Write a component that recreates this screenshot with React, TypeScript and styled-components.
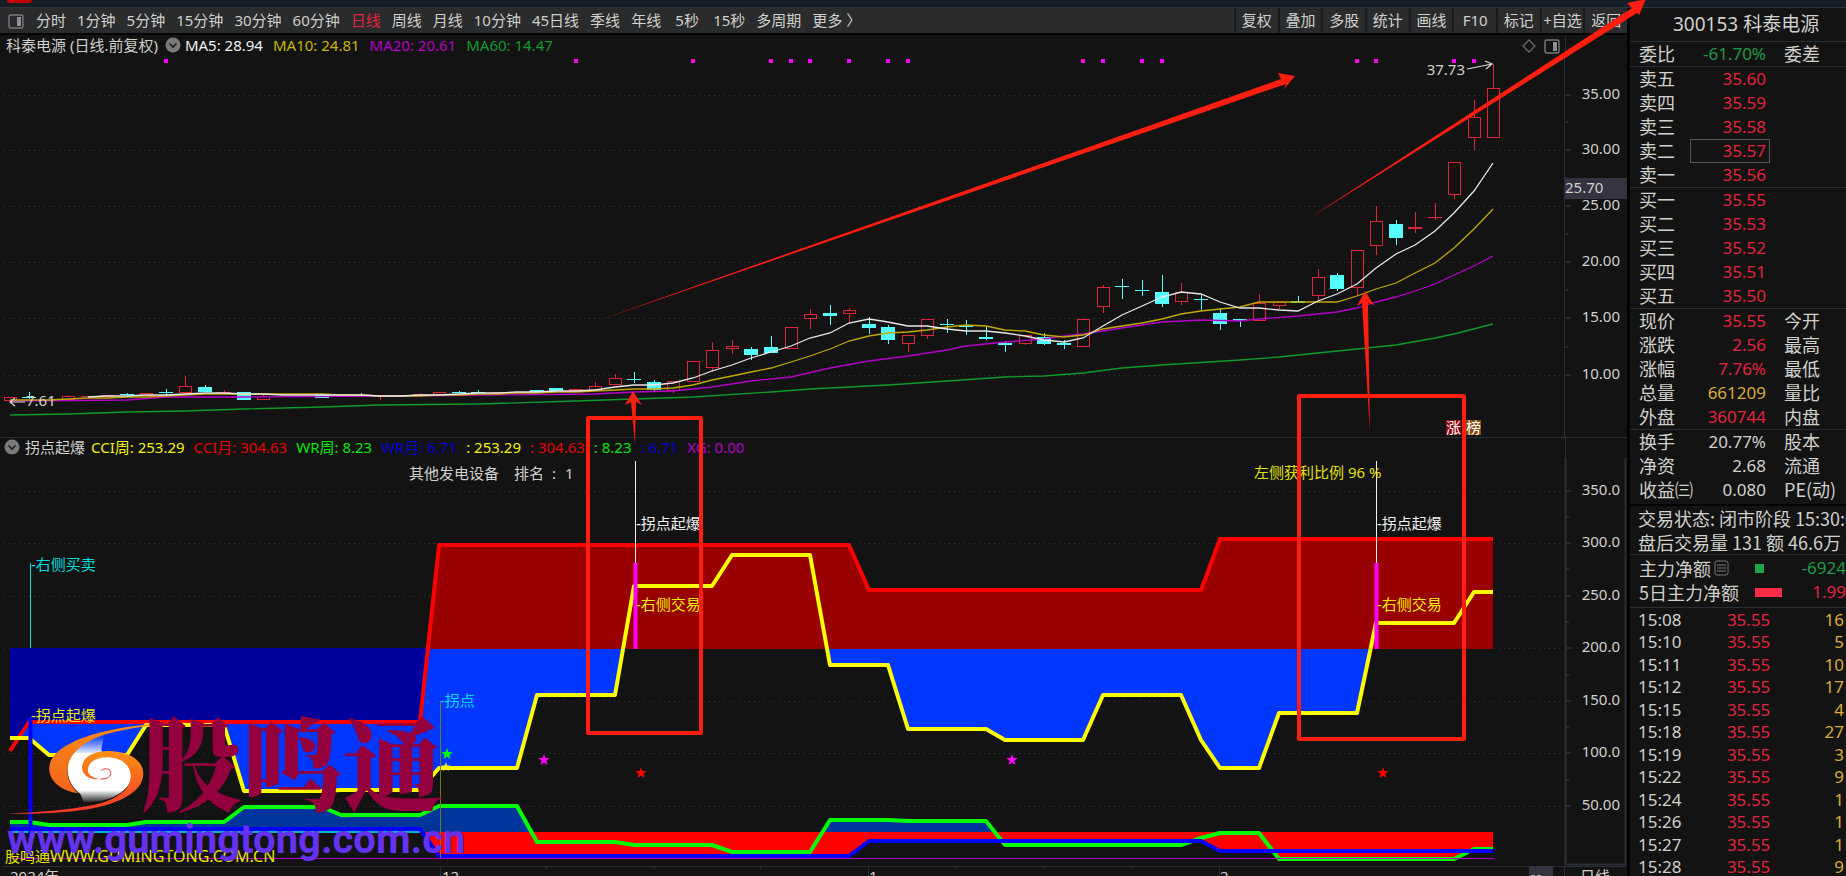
import React from 'react';
import styled, { createGlobalStyle } from 'styled-components';

const LATIN = '"Noto Sans", "Noto Sans CJK SC", sans-serif';

const GlobalStyle = createGlobalStyle`
  *, *::before, *::after { box-sizing: border-box; }
  body { margin: 0; background: #131213; overflow: hidden; }
  button { font: inherit; color: inherit; background: none; border: 0; padding: 0; cursor: pointer; white-space: nowrap; }
`;

const C = {
  bg: '#141314',
  line: '#2a2e36',
  text: '#d0d0cc',
  red: '#e0243c',
  green: '#1f9a45',
  gold: '#d9ab38',
  cyan: '#55ffff',
  mark: '#ff1e10',
};

/* ---------- page frame ---------- */

const Page = styled.div`
  height: 100vh;
  overflow: hidden;
  background: ${C.bg};
  color: ${C.text};
  font-family: ${LATIN};
  font-size: 15px;
  line-height: 20px;
`;

const TopStrip = styled.div`
  height: 8px;
  background: #161d25;
  border-bottom: 1px solid #2c333b;
`;

const RedTab = styled.div`
  width: 25px;
  height: 3px;
  margin-left: 7px;
  background: #c00404;
  border-radius: 0 0 4px 4px;
`;

const Columns = styled.div`
  display: flex;
  align-items: flex-start;
`;

const Main = styled.main`
  position: relative;
  flex: 1;
  min-width: 0;
`;

/* ---------- toolbar ---------- */

const Toolbar = styled.nav`
  display: flex;
  align-items: center;
  justify-content: space-between;
  height: 25px;
  padding-left: 7px;
  background: #2a2b2d;
`;

const Periods = styled.div`
  display: flex;
  align-items: center;
  gap: 11px;
`;

const Period = styled.button<{ $active?: boolean }>`
  min-width: 30px;
  line-height: 25px;
  color: ${(p) => (p.$active ? C.red : C.text)};
`;

const PanelToggle = styled.button`
  width: 18px;
  height: 16px;
`;

const Tools = styled.div`
  display: grid;
  grid-template-columns: repeat(9, 1fr);
  width: 393px;
  height: 25px;
`;

const Tool = styled.button`
  border-left: 2px solid #1b1b1c;
  line-height: 25px;
`;

/* ---------- chart panels ---------- */

const ChartHead = styled.header<{ $lower?: boolean }>`
  display: flex;
  align-items: center;
  height: ${(p) => (p.$lower ? 21 : 24)}px;
  padding-left: ${(p) => (p.$lower ? 4 : 6)}px;
  border-top: ${(p) => (p.$lower ? `1px solid ${C.line}` : '2px solid #050505')};
`;

const ChartTitle = styled.div<{ $gap: number; $after: number }>`
  display: flex;
  align-items: center;
  gap: ${(p) => p.$gap}px;
  margin-right: ${(p) => p.$after}px;
  padding-bottom: 2px;
  white-space: nowrap;
`;

const Legend = styled.div<{ $gap: number }>`
  display: flex;
  flex: 1;
  align-items: center;
  gap: ${(p) => p.$gap}px;
  padding-bottom: 2px;
  white-space: nowrap;
`;

const LegendItem = styled.span<{ $color: string }>`
  color: ${(p) => p.$color};
`;

const HeadIcons = styled.div`
  display: flex;
  align-items: center;
  gap: 7px;
  margin-right: 5px;
`;

const AxisHead = styled.div`
  align-self: stretch;
  width: 62px;
  border-left: 1px solid ${C.line};
`;

const Chart = styled.svg`
  display: block;
  width: 100%;
  height: auto;
  font-family: ${LATIN};
  font-size: 15px;
`;

const Marks = styled.svg`
  position: absolute;
  top: 0;
  left: 0;
  width: 100%;
  height: auto;
  overflow: visible;
  pointer-events: none;
`;

/* ---------- quote panel ---------- */

const Side = styled.aside`
  flex: none;
  width: 219px;
  border-left: 3px solid #020202;
  overflow: hidden;
  font-family: "Noto Sans CJK SC", sans-serif;
  font-size: 18px;
  white-space: nowrap;
`;

const StockName = styled.h1`
  margin: 0;
  height: 34px;
  padding-left: 43px;
  border-bottom: 1px solid ${C.line};
  font-family: ${LATIN};
  font-size: 19px;
  font-weight: 400;
  line-height: 33px;
`;

const Block = styled.section<{ $pad?: string; $strong?: boolean }>`
  padding: ${(p) => p.$pad ?? '0'};
  border-bottom: ${(p) => (p.$strong ? '2px solid #020202' : `1px solid ${C.line}`)};
`;

const QuoteTable = styled.table`
  width: 100%;
  table-layout: fixed;
  border-collapse: separate;
  border-spacing: 0;
  td, th { padding: 0; height: 24px; line-height: 22px; font-weight: 400; text-align: left; vertical-align: top; }
`;

const Label = styled.th`
  width: 60px;
  && { padding-left: 9px; }
`;

const Value = styled.td<{ $color?: string }>`
  width: 80px;
  color: ${(p) => p.$color ?? C.text};
  font-family: ${LATIN};
  font-size: 17px;
  && { text-align: right; }
`;

const Amount = styled.span<{ $boxed?: boolean }>`
  display: block;
  height: 24px;
  padding-right: 3px;
  border: 1px solid ${(p) => (p.$boxed ? '#555' : 'transparent')};
  line-height: 21px;
`;

const Label2 = styled.th`
  && { padding-left: 14px; }
`;

const Status = styled.p`
  margin: 0;
  padding-left: 8px;
  font-size: 18px;
  line-height: 24px;
`;

const FlowRow = styled.div`
  display: flex;
  align-items: center;
  height: 24px;
  padding-left: 9px;
`;

const FlowLabel = styled.span`
  display: flex;
  align-items: center;
  gap: 3px;
  width: 116px;
`;

const FlowBar = styled.span<{ $color: string; $w: number }>`
  width: ${(p) => p.$w}px;
  height: 9px;
  background: ${(p) => p.$color};
`;

const FlowValue = styled.span<{ $color: string }>`
  flex: 1;
  color: ${(p) => p.$color};
  font-family: ${LATIN};
  font-size: 17px;
  text-align: right;
`;

const TickTable = styled.table`
  width: 100%;
  border-collapse: separate;
  border-spacing: 0;
  font-family: ${LATIN};
  font-size: 17px;
  line-height: 22px;
  td { padding: 0; height: 23px; }
  tr:nth-child(even) td { height: 22px; }
`;

const TickTime = styled.td`
  && { padding-left: 8px; }
`;

const TickPrice = styled.td`
  width: 90px;
  color: ${C.red};
  text-align: right;
`;

const TickVolume = styled.td`
  width: 77px;
  color: ${C.gold};
  text-align: right;
  && { padding-right: 2px; }
`;

/* ---------- data ---------- */

const periods = ['分时', '1分钟', '5分钟', '15分钟', '30分钟', '60分钟', '日线', '周线', '月线', '10分钟', '45日线', '季线', '年线', '5秒', '15秒', '多周期', '更多 〉'];
const tools = ['复权', '叠加', '多股', '统计', '画线', 'F10', '标记', '+自选', '返回'];

const maLegend: [string, string][] = [
  ['MA5: 28.94', '#f0f0f0'],
  ['MA10: 24.81', '#c9b400'],
  ['MA20: 20.61', '#b400c8'],
  ['MA60: 14.47', '#0f9a2c'],
];
const cciLegend: [string, string][] = [
  ['CCI周: 253.29', '#f2f200'],
  ['CCI月: 304.63', '#e60000'],
  ['WR周: 8.23', '#00e600'],
  ['WR月: 6.71', '#0000dc'],
  [': 253.29', '#f2f200'],
  [': 304.63', '#e60000'],
  [': 8.23', '#00e600'],
  [': 6.71', '#0000dc'],
  ['XG: 0.00', '#b400c8'],
];

// [index, kind, body top, body bottom, wick top, wick bottom]
type Candle = [number, 'r' | 'c', number, number, number, number];
const candles: Candle[] = [
  [0, 'r', 397, 401, 397, 401], [1, 'c', 397, 397, 392, 399], [3, 'r', 396, 400, 395, 400], [4, 'r', 396, 397, 396, 397],
  [5, 'r', 395, 397, 395, 397], [6, 'c', 394, 395, 393, 396], [7, 'r', 393, 396, 393, 396], [8, 'c', 392, 392, 389, 395],
  [9, 'r', 386, 393, 376, 393], [10, 'c', 387, 392, 385, 392], [11, 'r', 392, 392, 390, 393], [12, 'c', 392, 400, 392, 400],
  [13, 'r', 396, 400, 395, 400], [14, 'r', 394, 395, 394, 395], [16, 'c', 394, 398, 394, 398], [17, 'r', 396, 397, 396, 397],
  [18, 'c', 395, 395, 393, 396], [19, 'r', 396, 397, 396, 400], [20, 'r', 396, 397, 396, 397], [21, 'r', 394, 395, 393, 395],
  [22, 'r', 392, 395, 392, 395], [23, 'c', 392, 393, 391, 393], [24, 'c', 392, 393, 390, 393], [25, 'r', 392, 393, 392, 393],
  [27, 'c', 390, 392, 390, 392], [28, 'c', 388, 391, 388, 391], [29, 'r', 389, 391, 389, 391], [30, 'r', 386, 390, 382, 390],
  [31, 'r', 378, 385, 374, 385], [32, 'c', 379, 379, 372, 383], [33, 'c', 382, 390, 380, 391], [34, 'r', 381, 391, 381, 393],
  [35, 'r', 361, 382, 361, 382], [36, 'r', 350, 368, 342, 372], [37, 'r', 346, 349, 340, 354], [38, 'c', 349, 355, 347, 360],
  [39, 'c', 347, 353, 336, 353], [40, 'r', 327, 349, 327, 349], [41, 'r', 314, 319, 309, 329], [42, 'c', 313, 316, 305, 325],
  [43, 'r', 310, 314, 308, 323], [44, 'c', 324, 328, 317, 334], [45, 'c', 327, 340, 325, 344], [46, 'r', 335, 344, 335, 352],
  [47, 'r', 319, 336, 319, 339], [48, 'c', 324, 324, 319, 333], [49, 'c', 326, 326, 320, 335], [50, 'c', 337, 339, 326, 340],
  [51, 'c', 343, 345, 341, 352], [52, 'r', 335, 344, 335, 345], [53, 'c', 337, 344, 333, 345], [54, 'c', 343, 345, 340, 349],
  [55, 'r', 319, 347, 319, 347], [56, 'r', 287, 307, 285, 313], [57, 'c', 286, 286, 279, 299], [58, 'c', 290, 290, 280, 296],
  [59, 'c', 292, 304, 275, 307], [60, 'r', 292, 302, 283, 305], [61, 'c', 299, 299, 295, 310], [62, 'c', 313, 324, 308, 330],
  [63, 'c', 319, 321, 319, 327], [64, 'r', 303, 321, 294, 321], [65, 'r', 302, 306, 302, 309], [66, 'c', 301, 303, 296, 303],
  [67, 'r', 277, 296, 269, 301], [68, 'c', 275, 289, 273, 291], [69, 'r', 250, 288, 250, 296], [70, 'r', 221, 246, 206, 255],
  [71, 'c', 224, 238, 220, 245], [72, 'r', 227, 229, 212, 233], [73, 'r', 217, 217, 203, 220], [74, 'r', 162, 195, 162, 199],
  [75, 'r', 117, 138, 100, 150], [76, 'r', 88, 138, 64, 138],
];

type Pt = [number, number];
const ma5 = [
  397, 396, 396, 395, 395, 394, 393, 393, 394, 394, 395, 395, 395, 395, 395, 396, 396, 395, 395, 394, 393, 393, 392, 392, 391, 391, 390,
  387, 385, 385, 383, 378, 371, 365, 358, 352, 346, 338, 333, 323, 319, 322, 326, 326, 329, 331, 331, 333, 336, 340, 342, 338, 326, 315,
  306, 297, 292, 294, 302, 308, 308, 310, 311, 301, 294, 284, 268, 254, 245, 231, 213, 191, 163,
].map((y, i): Pt => [i + 4, y]);
const ma10 = [
  400, 400, 400, 399, 398, 398, 397, 397, 396, 395, 394, 394, 394, 394, 394, 394, 394, 395, 395, 396, 396, 396, 395, 395, 394, 394, 393,
  393, 392, 392, 391, 390, 389, 389, 388, 385, 380, 376, 372, 368, 362, 356, 349, 341, 336, 333, 332, 330, 327, 325, 326, 330, 331, 335,
  337, 335, 329, 326, 323, 319, 314, 311, 309, 307, 302, 302, 302, 302, 302, 296, 289, 283, 273, 263, 248, 229, 209,
].map((y, i): Pt => [i, y]);
const ma20: Pt[] = [
  [0, 401], [6, 400], [8, 397], [12, 397], [20, 396], [30, 394], [32, 392], [34, 391], [36, 387], [38, 381], [40, 377], [42, 368],
  [44, 361], [46, 356], [48, 350], [49, 346], [51, 342], [53, 339], [54, 336], [55, 334], [56, 331], [57, 328], [59, 322], [61, 320],
  [63, 321], [64, 319], [66, 316], [68, 312], [69, 308], [70, 302], [71, 297], [72, 291], [73, 284], [74, 275], [75, 266], [76, 256],
];
const ma60: Pt[] = [
  [0, 415], [3, 414], [6, 412], [9, 411], [12, 409], [16, 407], [19, 405], [24, 404], [29, 401], [32, 399], [35, 397], [39, 392],
  [41, 389], [45, 385], [48, 381], [51, 377], [53, 376], [55, 373], [57, 368], [59, 365], [63, 360], [65, 357], [67, 353], [69, 349],
  [71, 345], [73, 338], [74, 334], [76, 324],
];
const signalDots = [8, 29, 35, 39, 40, 41, 43, 45, 46, 55, 56, 58, 59, 69, 70, 74, 75];

const cciMonth: Pt[] = [[0, 751], [1, 722], [21, 722], [22, 545], [43, 545], [44, 590], [61, 590], [62, 539], [76, 539]];
const cciWeek: Pt[] = [
  [0, 738], [1, 738], [2, 755], [6, 755], [7, 725], [11, 725], [12, 791], [16, 791], [17, 790], [21, 790], [22, 768], [26, 768], [27, 695],
  [31, 695], [32, 586], [36, 586], [37, 555], [41, 555], [42, 665], [45, 665], [46, 729], [50, 729], [51, 740], [55, 740], [56, 695],
  [60, 695], [61, 740], [62, 768], [64, 768], [65, 713], [69, 713], [70, 623], [74, 623], [75, 592], [76, 592],
];
const wrWeek: Pt[] = [
  [0, 822], [1, 822], [2, 825], [6, 825], [7, 822], [11, 822], [12, 807], [16, 807], [17, 815], [21, 815], [22, 806], [26, 806],
  [27, 842], [31, 842], [32, 845], [36, 845], [37, 852], [41, 852], [42, 820], [45, 820], [46, 821], [50, 821], [51, 845], [60, 845],
  [61, 838], [62, 833], [64, 833], [65, 859], [74, 859], [75, 849], [76, 849],
];
const wrMonth: Pt[] = [[0, 829], [21, 829], [22, 856], [43, 856], [44, 841], [61, 841], [62, 851], [76, 851]];

const xAt = (i: number) => Math.floor(10 + i * 19.526);
const toPoints = (pts: Pt[]) => pts.map(([i, y]) => `${xAt(i)},${y}`).join(' ');
const toArea = (pts: Pt[], base: number) => `${xAt(pts[0][0])},${base} ${toPoints(pts)} ${xAt(76)},${base}`;

const priceAxis: [string, number][] = [['35.00', 95], ['30.00', 150], ['25.00', 206], ['20.00', 262], ['15.00', 318], ['10.00', 375]];
const valueAxis: [string, number][] = [['350.0', 491], ['300.0', 543], ['250.0', 596], ['200.0', 648], ['150.0', 701], ['100.0', 753], ['50.00', 806]];

type Row = [string, string, string?, string?, boolean?];
const sells: Row[] = [['卖五', '35.60'], ['卖四', '35.59'], ['卖三', '35.58'], ['卖二', '35.57', C.red, '', true], ['卖一', '35.56']];
const buys: Row[] = [['买一', '35.55'], ['买二', '35.53'], ['买三', '35.52'], ['买四', '35.51'], ['买五', '35.50']];
const summary: Row[] = [
  ['现价', '35.55', C.red, '今开'], ['涨跌', '2.56', C.red, '最高'], ['涨幅', '7.76%', C.red, '最低'],
  ['总量', '661209', C.gold, '量比'], ['外盘', '360744', C.red, '内盘'],
];
const capital: Row[] = [['换手', '20.77%', C.text, '股本'], ['净资', '2.68', C.text, '流通'], ['收益㈢', '0.080', C.text, 'PE(动)']];
const ticks: [string, string][] = [
  ['15:08', '16'], ['15:10', '5'], ['15:11', '10'], ['15:12', '17'], ['15:15', '4'], ['15:18', '27'],
  ['15:19', '3'], ['15:22', '9'], ['15:24', '1'], ['15:26', '1'], ['15:27', '1'], ['15:28', '9'],
];

/* ---------- drawings ---------- */

const PanelIcon = () => (
  <svg width="16" height="15" viewBox="0 0 16 15" fill="none" aria-hidden="true">
    <rect x="1" y="1" width="14" height="13" rx="2" stroke="#77797c" strokeWidth="1.4" />
    <rect x="9" y="3" width="4" height="9" fill="#8d8f92" />
  </svg>
);

const Chevron = () => (
  <svg width="16" height="16" viewBox="0 0 16 16" fill="none" aria-hidden="true">
    <circle cx="8" cy="8" r="7.5" fill="#7a7a7a" />
    <path d="M4.5 6.5 8 10l3.5-3.5" stroke="#1d1d1d" strokeWidth="1.6" />
  </svg>
);

const Grid = ({ rows }: { rows: [string, number][] }) => (
  <>
    {rows.map(([label, y]) => (
      <g key={label}>
        <line x1="4" x2="1563" y1={y} y2={y} stroke="#30333a" strokeDasharray="1 4" shapeRendering="crispEdges" />
        <line x1="1565" x2="1571" y1={y} y2={y} stroke="#3b404a" />
        <text x="1620" y={y + 4} fill={C.text} textAnchor="end">{label}</text>
      </g>
    ))}
  </>
);

const CandleShape = ({ c: [i, kind, t, b, hi, lo] }: { c: Candle }) => {
  const x = xAt(i);
  const color = kind === 'r' ? C.red : C.cyan;
  if (b - t < 3) {
    return (
      <g fill={color}>
        <rect x={x - 7} y={t} width="14" height={Math.max(1, b - t)} />
        <rect x={x} y={hi} width="1" height={lo - hi} />
      </g>
    );
  }
  return (
    <g fill={color}>
      <rect x={x} y={hi} width="1" height={t - hi} />
      <rect x={x} y={b} width="1" height={lo - b} />
      {kind === 'r'
        ? <path fillRule="evenodd" d={`M${x - 6} ${t}h13v${b - t}h-13zM${x - 5} ${t + 1}v${b - t - 2}h11v-${b - t - 2}z`} />
        : <rect x={x - 7} y={t} width="14" height={b - t} />}
    </g>
  );
};

const Star = ({ x, y, fill, r = 6 }: { x: number; y: number; fill: string; r?: number }) => (
  <polygon
    fill={fill}
    points={Array.from({ length: 10 }, (_, k) => {
      const a = (Math.PI / 5) * k - Math.PI / 2;
      const q = k % 2 ? r * 0.4 : r;
      return `${(x + q * Math.cos(a)).toFixed(1)},${(y + q * Math.sin(a)).toFixed(1)}`;
    }).join(' ')}
  />
);

const PriceChart = () => (
  <Chart viewBox="0 57 1627 380" role="img" aria-label="日线K线图">
    <Grid rows={priceAxis} />
    <line x1="1564.5" x2="1564.5" y1="57" y2="437" stroke={C.line} />
    {[122, 178, 234, 290, 347].map((y) => <line key={y} x1="1565" x2="1568" y1={y} y2={y} stroke="#3b404a" />)}
    <rect x="1565" y="178" width="62" height="21" fill="#35333f" />
    <text x="1565" y="193" fill={C.text}>25.70</text>
    <g shapeRendering="crispEdges">
      {signalDots.map((i) => <rect key={i} x={xAt(i) - 2} y="59" width="4" height="4" fill="#ff00ff" />)}
      {candles.map((c) => <CandleShape key={c[0]} c={c} />)}
    </g>
    <g fill="none" strokeWidth="1.3">
      <polyline points={toPoints(ma60)} stroke="#0f9a2c" />
      <polyline points={toPoints(ma20)} stroke="#b400c8" />
      <polyline points={toPoints(ma10)} stroke="#c0a800" />
      <polyline points={toPoints(ma5)} stroke="#e8e8e8" />
    </g>
    <text x="1465" y="75" fill={C.text} textAnchor="end">37.73</text>
    <path d="M1467 69 1492 64M1485 61l7 3-6 5" fill="none" stroke="#d8d8d8" strokeWidth="1.2" />
    <text x="26" y="406" fill={C.text}>7.61</text>
    <path d="M10 402h15M15 398l-5 4 5 4" fill="none" stroke="#d8d8d8" strokeWidth="1.2" />
    <rect x="1446" y="420" width="15" height="15" fill="#8e0606" />
    <rect x="1466" y="420" width="15" height="15" fill="#8a4a0c" />
    <text x="1446" y="433" fill="#fff">涨</text>
    <text x="1466" y="433" fill="#fff">榜</text>
  </Chart>
);

const Swirl = () => (
  <g transform="translate(0 700) scale(.3333)">
    <defs>
      <linearGradient id="outer" x1="0" y1="0" x2="0" y2="1">
        <stop offset="0" stopColor="#fa8c18" />
        <stop offset="1" stopColor="#f4631c" />
      </linearGradient>
      <linearGradient id="inner" x1="0" y1="0" x2="0" y2="1">
        <stop offset="0" stopColor="#fb9114" />
        <stop offset="1" stopColor="#f4342a" />
      </linearGradient>
      <linearGradient id="body" x1="0" y1="0" x2="0" y2="1">
        <stop offset="0" stopColor="#fff" stopOpacity="0" />
        <stop offset=".3" stopColor="#fff" />
        <stop offset=".82" stopColor="#fff" />
        <stop offset="1" stopColor="#fff" stopOpacity=".1" />
      </linearGradient>
    </defs>
    <path fill="url(#body)" d="M312 106C240 120 198 160 203 216c4 36 24 54 38 66l10 24c60 4 130-20 146-76 4-46-36-72-82-72-20 0-6-22-3-52z" />
    <path fill="url(#outer)" d="M562 66C420 70 290 90 215 128 165 153 145 180 148 212c4 36 40 60 86 68-24-24-32-48-32-70 4-50 50-88 118-108 70-20 150-28 242-36z" />
    <path fill="url(#inner)" d="M22 341c110 2 240-4 316-32 60-22 92-50 92-90-2-42-50-68-112-66-44 2-72 22-72 50 2 24 22 36 56 35-26-4-40-14-38-30 2-22 24-35 56-36 42 0 72 22 72 56 0 40-42 72-108 86-78 16-170 22-262 27z" />
    <path fill="none" stroke="#e8382c" strokeWidth="3" d="M304 212c8-8 24-8 28 3 3 14-10 23-30 22" />
  </g>
);

const IndicatorChart = () => (
  <Chart viewBox="0 458 1627 418" role="img" aria-label="拐点起爆指标图">
    <defs>
      <clipPath id="above"><rect x="0" y="458" width="1627" height="191" /></clipPath>
      <clipPath id="below"><rect x="0" y="648" width="1627" height="200" /></clipPath>
      <clipPath id="wrAbove"><rect x="0" y="790" width="1627" height="42" /></clipPath>
      <clipPath id="wrBelow"><rect x="0" y="832" width="1627" height="34" /></clipPath>
    </defs>
    <Grid rows={valueAxis} />
    <path d="M1565.5 458V865M1625.5 458V865M1565 864.5h61" stroke={C.line} strokeWidth="2" />
    {[517, 569, 622, 675, 727, 780].map((y) => <line key={y} x1="1566" x2="1569" y1={y} y2={y} stroke="#3b404a" />)}

    <polygon points={toArea(cciWeek, 648)} fill="#0037ff" clipPath="url(#below)" />
    <polygon points="10,648 429,648 420,722 30,722 19,738 10,738" fill="#00009a" />
    <polygon points={toArea(cciMonth, 649)} fill="#990000" clipPath="url(#above)" />
    <polygon points={toArea(wrWeek, 832)} fill="#00369c" clipPath="url(#wrAbove)" />
    <polygon points={toArea(wrWeek, 832)} fill="#f00" clipPath="url(#wrBelow)" />
    <polygon points={`${xAt(21)},832 ${toPoints(wrMonth.slice(2))} ${xAt(76)},832`} fill="#f00" clipPath="url(#wrBelow)" />
    <polyline points="10,832 420,832" stroke="#00b4d2" strokeWidth="2" fill="none" />

    <g fill="none" strokeWidth="4" strokeLinejoin="round">
      <polyline points={toPoints(cciMonth)} stroke="#f00" />
      <polyline points={toPoints(cciWeek)} stroke="#ff0" />
      <polyline points={toPoints(wrWeek)} stroke="#0f0" />
      <polyline points={toPoints(wrMonth)} stroke="#00f" />
    </g>
    <line x1="10" x2="1494" y1="858.5" y2="858.5" stroke="#b400c8" />

    <line x1="30.5" x2="30.5" y1="563" y2="648" stroke="#00dcdc" />
    <line x1="30.5" x2="30.5" y1="717" y2="858" stroke="#00f" strokeWidth="4" />
    <line x1="440.5" x2="440.5" y1="702" y2="858" stroke="#76761e" />
    {[635.5, 1376.5].map((x) => (
      <g key={x}>
        <line x1={x} x2={x} y1="461" y2="563" stroke="#f2f2f2" />
        <line x1={x} x2={x} y1="563" y2="649" stroke="#f0f" strokeWidth="4" />
      </g>
    ))}

    <text x="31" y="570" fill="#00dcdc">-右侧买卖</text>
    <text x="31" y="721" fill="#f0f000">-拐点起爆</text>
    <text x="440" y="706" fill="#00dcff">-拐点</text>
    <text x="636" y="529" fill="#f0f0f0">-拐点起爆</text>
    <text x="636" y="610" fill="#f0f000">-右侧交易</text>
    <text x="1377" y="529" fill="#f0f0f0">-拐点起爆</text>
    <text x="1377" y="610" fill="#f0f000">-右侧交易</text>
    <text x="1254" y="478" fill="#e0e000">左侧获利比例 96 %</text>
    <text x="409" y="479" fill={C.text}>其他发电设备</text>
    <text x="514" y="479" fill={C.text}>排名</text>
    <text x="552" y="479" fill={C.text}>:</text>
    <text x="565" y="479" fill={C.text}>1</text>
    <text x="5" y="862" fill="#e6e600">股鸣通<tspan fontSize="16">WWW.GUMINGTONG.COM.CN</tspan></text>

    <Star x={447} y={754} fill="#0f0" />
    <Star x={446} y={767} fill="#ff0" r={5} />
    <Star x={544} y={760} fill="#f0f" />
    <Star x={1012} y={760} fill="#f0f" />
    <Star x={641} y={773} fill="#f00" />
    <Star x={1383} y={773} fill="#f00" />

    <path d="M2 866.5H1627M440.5 866V876M868.5 866V876M1219.5 866V876M1564.5 866V876" stroke={C.line} />
    <path d="M546.5 866v3M654.5 866v3M760.5 866v3M955.5 866v3M1044.5 866v3M1132.5 866v3" stroke={C.line} />
    <rect x="1529" y="866" width="24" height="10" fill="#35333f" />
    <g fill={C.text}>
      <text x="10" y="882">2024年</text>
      <text x="442" y="882">12</text>
      <text x="869" y="882">1</text>
      <text x="1220" y="882">2</text>
      <text x="1580" y="882">日线</text>
    </g>
    <path d="M1531 875.5h4M1537 875.5h4" stroke="#aaa" />

    <Swirl />
    <text x="141" y="803" fill="#94003e" fontSize="101" fontWeight="900" fontFamily='"Noto Serif CJK SC", "Noto Sans CJK SC", serif'>股鸣通</text>
    <text x="7" y="853" fill="#6432f0" fontSize="40" fontWeight="700" fontFamily='Roboto, "Liberation Sans", sans-serif'>www.gumingtong.com.cn</text>
  </Chart>
);

const Annotations = () => (
  <Marks viewBox="0 8 1627 868" aria-hidden="true">
    <g fill="none" stroke={C.mark} strokeWidth="4" strokeLinejoin="round">
      <rect x="588" y="418" width="113" height="315" />
      <rect x="1299" y="396" width="165" height="343" />
    </g>
    <g fill={C.mark}>
      <path d="M591 323 1281 79 1278 73 1295 76 1284 89 1286 84z" />
      <path d="M1305 221 1632 8 1627 3 1646 -1 1639 15 1637 13z" />
      <path d="M635 444 631 402 625 405 633 391 642 405 636 402z" />
      <path d="M1370 432 1362 303 1357 306 1365 291 1374 305 1368 303z" />
    </g>
  </Marks>
);

const Rows = ({ rows }: { rows: Row[] }) => (
  <QuoteTable>
    <tbody>
      {rows.map(([label, value, color = C.red, label2, boxed]) => (
        <tr key={label}>
          <Label scope="row">{label}</Label>
          <Value $color={color}><Amount $boxed={boxed}>{value}</Amount></Value>
          <Label2 scope="row">{label2}</Label2>
        </tr>
      ))}
    </tbody>
  </QuoteTable>
);

export default function App() {
  return (
    <Page>
      <GlobalStyle />
      <TopStrip><RedTab /></TopStrip>
      <Columns>
        <Main>
          <Toolbar>
            <Periods>
              <PanelToggle aria-label="侧栏"><PanelIcon /></PanelToggle>
              {periods.map((p) => <Period key={p} $active={p === '日线'}>{p}</Period>)}
            </Periods>
            <Tools>{tools.map((t) => <Tool key={t}>{t}</Tool>)}</Tools>
          </Toolbar>

          <ChartHead>
            <ChartTitle $gap={7} $after={4}>
              <span>科泰电源 (日线.前复权)</span>
              <Chevron />
            </ChartTitle>
            <Legend $gap={10}>
              {maLegend.map(([t, c]) => <LegendItem key={t} $color={c}>{t}</LegendItem>)}
            </Legend>
            <HeadIcons>
              <svg width="16" height="16" viewBox="0 0 16 16" aria-hidden="true">
                <path d="M8 2l6 6-6 6-6-6z" fill="none" stroke="#66686b" strokeWidth="1.3" />
              </svg>
              <PanelIcon />
            </HeadIcons>
            <AxisHead />
          </ChartHead>
          <PriceChart />

          <ChartHead $lower>
            <ChartTitle $gap={5} $after={6}>
              <Chevron />
              <span>拐点起爆</span>
            </ChartTitle>
            <Legend $gap={9}>
              {cciLegend.map(([t, c], i) => <LegendItem key={i} $color={c}>{t}</LegendItem>)}
            </Legend>
            <AxisHead />
          </ChartHead>
          <IndicatorChart />
          <Annotations />
        </Main>

        <Side>
          <StockName>300153 科泰电源</StockName>
          <Block><Rows rows={[['委比', '-61.70%', C.green, '委差']]} /></Block>
          <Block><Rows rows={sells} /></Block>
          <Block><Rows rows={buys} /></Block>
          <Block><Rows rows={summary} /></Block>
          <Block $pad="0 0 2px" $strong><Rows rows={capital} /></Block>
          <Block>
            <Status>交易状态: 闭市阶段 15:30:00</Status>
            <Status>盘后交易量 131 额 46.6万</Status>
          </Block>
          <Block $pad="1px 0 3px">
            <FlowRow>
              <FlowLabel>
                主力净额
                <svg width="15" height="16" viewBox="0 0 15 16" fill="none" aria-hidden="true">
                  <rect x="1" y="1" width="13" height="14" rx="2" stroke="#77797c" />
                  <path d="M3 5h9M3 8h9M3 11h9" stroke="#77797c" />
                </svg>
              </FlowLabel>
              <FlowBar $color="#1fa34c" $w={9} />
              <FlowValue $color={C.green}>-6924</FlowValue>
            </FlowRow>
            <FlowRow>
              <FlowLabel>5日主力净额</FlowLabel>
              <FlowBar $color="#fb2c48" $w={27} />
              <FlowValue $color={C.red}>1.99</FlowValue>
            </FlowRow>
          </Block>
          <TickTable>
            <tbody>
              {ticks.map(([time, volume]) => (
                <tr key={time}>
                  <TickTime>{time}</TickTime>
                  <TickPrice>35.55</TickPrice>
                  <TickVolume>{volume}</TickVolume>
                </tr>
              ))}
            </tbody>
          </TickTable>
        </Side>
      </Columns>
    </Page>
  );
}
